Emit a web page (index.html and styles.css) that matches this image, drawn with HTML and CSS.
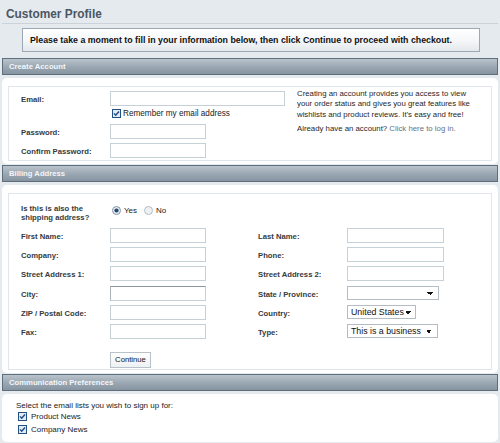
FILE: index.html
```html
<!DOCTYPE html>
<html>
<head>
<meta charset="utf-8">
<link rel="stylesheet" href="styles.css">
</head>
<body>
<div class="page">
  <h1 class="title">Customer Profile</h1>
  <div class="notice">Please take a moment to fill in your information below, then click Continue to proceed with checkout.</div>

  <section class="sec">
    <h2 class="bar">Create Account</h2>
    <div class="panel">
      <div class="box account">
        <div class="acct-form">
          <div class="row"><label class="lbl">Email:</label><input class="txt wide" type="text"></div>
          <div class="remember"><svg class="cb" width="9" height="9" viewBox="0 0 9 9"><rect x="0.5" y="0.5" width="8" height="8" fill="#e4eaf1" stroke="#22507f"/><path d="M2 4.4 L3.7 6.3 L7 2.5" fill="none" stroke="#1e4a8a" stroke-width="1.4"/></svg><span>Remember my email address</span></div>
          <div class="row r-pw"><label class="lbl">Password:</label><input class="txt" type="password"></div>
          <div class="row r-cpw"><label class="lbl">Confirm Password:</label><input class="txt" type="password"></div>
        </div>
        <div class="acct-info">
          <p>Creating an account provides you access to view your order status and gives you great features like wishlists and product reviews. It's easy and free!</p>
          <p class="login">Already have an account? <a class="link">Click here to log in.</a></p>
        </div>
      </div>
    </div>
  </section>

  <section class="sec">
    <h2 class="bar">Billing Address</h2>
    <div class="panel">
      <div class="box billing">
        <div class="question">
          <span class="lbl q-lbl">Is this is also the shipping address?</span>
          <div class="radios">
            <svg class="rd" width="9" height="9" viewBox="0 0 9 9"><circle cx="4.5" cy="4.5" r="4" fill="#e8ecf1" stroke="#8596a8"/><circle cx="4.5" cy="4.5" r="2.1" fill="#23466f"/></svg><span>Yes</span>
            <svg class="rd rd-no" width="9" height="9" viewBox="0 0 9 9"><circle cx="4.5" cy="4.5" r="4" fill="#eef1f4" stroke="#b3bcc5"/></svg><span>No</span>
          </div>
        </div>
        <div class="bgrid">
          <label class="lbl">First Name:</label><input class="txt" type="text">
          <label class="lbl lbl-r">Last Name:</label><input class="txt" type="text">
          <label class="lbl">Company:</label><input class="txt" type="text">
          <label class="lbl lbl-r">Phone:</label><input class="txt" type="text">
          <label class="lbl">Street Address 1:</label><input class="txt" type="text">
          <label class="lbl lbl-r">Street Address 2:</label><input class="txt" type="text">
          <label class="lbl">City:</label><input class="txt dark" type="text">
          <label class="lbl lbl-r">State / Province:</label><select class="sel sel-state"><option></option></select>
          <label class="lbl">ZIP / Postal Code:</label><input class="txt" type="text">
          <label class="lbl lbl-r">Country:</label><select class="sel sel-country"><option>United States</option></select>
          <label class="lbl">Fax:</label><input class="txt" type="text">
          <label class="lbl lbl-r">Type:</label><select class="sel sel-type"><option>This is a business</option></select>
        </div>
        <div class="actions"><button class="btn" type="button">Continue</button></div>
      </div>
    </div>
  </section>

  <section class="sec">
    <h2 class="bar">Communication Preferences</h2>
    <div class="panel comm">
      <p class="comm-intro">Select the email lists you wish to sign up for:</p>
      <div class="opt"><svg class="cb" width="9" height="9" viewBox="0 0 9 9"><rect x="0.5" y="0.5" width="8" height="8" fill="#e4eaf1" stroke="#22507f"/><path d="M2 4.4 L3.7 6.3 L7 2.5" fill="none" stroke="#1e4a8a" stroke-width="1.4"/></svg><span>Product News</span></div>
      <div class="opt"><svg class="cb" width="9" height="9" viewBox="0 0 9 9"><rect x="0.5" y="0.5" width="8" height="8" fill="#e4eaf1" stroke="#22507f"/><path d="M2 4.4 L3.7 6.3 L7 2.5" fill="none" stroke="#1e4a8a" stroke-width="1.4"/></svg><span>Company News</span></div>
    </div>
  </section>
</div>
</body>
</html>
```

FILE: styles.css
```css
* { box-sizing: border-box; }
html, body { margin: 0; padding: 0; }
body {
  background: #e5eaef;
  font-family: "Liberation Sans", Arial, sans-serif;
  color: #222;
  font-size: 8px;
  width: 500px;
  height: 443px;
  overflow: hidden;
}
.page { padding: 0 2px; }

.title {
  margin: 0;
  padding: 7px 4px 2px;
  font-size: 11.9px;
  line-height: 14px;
  font-weight: bold;
  color: #4b5663;
  border-bottom: 1px solid #cbd3da;
}

.notice {
  margin: 4px 0 0 20px;
  width: 458px;
  height: 24px;
  border: 1px solid #9ca8b3;
  background: linear-gradient(#ffffff, #f4f6f8 55%, #e3e8ec);
  padding: 0 0 0 7px;
  font-weight: bold;
  font-size: 8.8px;
  line-height: 23px;
  color: #111;
  white-space: nowrap;
}

.bar {
  margin: 6px 0 0;
  height: 17px;
  border: 1px solid #5f6e7b;
  background: linear-gradient(#b9c3cb, #9ca9b4 50%, #8694a1);
  color: #f3f6f9;
  font-size: 7.7px;
  font-weight: bold;
  line-height: 15px;
  padding-left: 6px;
}
.sec + .sec .bar { margin-top: 1px; }

.panel {
  margin-top: 3px;
  background: #fff;
  border-radius: 5px;
  padding: 8px 6px 3px 6px;
}
.box { border: 1px solid #e0e6eb; }

.lbl {
  font-weight: bold;
  font-size: 7.7px;
  color: #353b40;
  padding-top: 2px;
}

.txt {
  height: 15px;
  width: 96px;
  border: 1px solid #c6d0d7;
  background: #fff;
  padding: 0 2px;
  margin: 0;
  font: 8px "Liberation Sans", Arial, sans-serif;
}
.txt.wide { width: 175px; }
.txt.dark { border-top-color: #8d979f; border-left-color: #a9b2b9; }

/* Create account */
.account {
  display: flex;
  padding: 4px 0 2px 12px;
}
.acct-form { width: 276px; }
.row { display: flex; align-items: center; height: 15px; }
.row .lbl { width: 89px; }
.remember {
  display: flex;
  align-items: center;
  gap: 2px;
  height: 12px;
  margin-top: 1px;
  padding-left: 91px;
  font-size: 8.2px;
  color: #222;
}
.r-pw { margin-top: 5px; }
.r-cpw { margin-top: 4px; }
.acct-info {
  width: 182px;
  margin-top: -2px;
  font-size: 7.8px;
  line-height: 10.4px;
  color: #1f1f1f;
}
.acct-info p { margin: 0; }
.acct-info .login { margin-top: 4px; }
.link { color: #66727e; }

/* Billing */
.billing { padding: 10px 0 1px 12px; }
.question { display: flex; height: 18px; margin-bottom: 6px; }
.q-lbl { width: 89px; line-height: 9px; padding-top: 0; }
.radios {
  display: flex;
  align-items: center;
  height: 10px;
  margin-top: 1px;
  padding-left: 2px;
  font-size: 8px;
  color: #222;
}
.rd { margin-right: 3px; }
.rd-no { margin-left: 7px; }

.bgrid {
  display: grid;
  grid-template-columns: 89px 96px 141px 97px;
  row-gap: 4.2px;
  align-items: center;
}
.bgrid .txt { width: auto; }
.lbl-r { padding-left: 52px; }

.sel {
  appearance: none;
  -webkit-appearance: none;
  height: 14px;
  border: 1px solid #b4bdc4;
  border-radius: 0;
  background-color: #fff;
  background-image: linear-gradient(45deg, transparent 50%, #111 50%), linear-gradient(135deg, #111 50%, transparent 50%);
  background-size: 3px 3px, 3px 3px;
  background-repeat: no-repeat;
  padding: 0 6px 0 3px;
  margin: 0;
  font: 8.8px "Liberation Sans", Arial, sans-serif;
  color: #111;
  line-height: 12px;
}
.sel-state { width: 92px; background-position: calc(100% - 8px) 5px, calc(100% - 5px) 5px; }
.sel-country { width: 69px; background-position: calc(100% - 7px) 5px, calc(100% - 4px) 5px; }
.sel-type { width: 91px; background-position: calc(100% - 8px) 5px, calc(100% - 5px) 5px; }

.actions { margin-top: 13px; padding-left: 89px; }
.btn {
  display: block;
  width: 41px;
  height: 16px;
  padding: 0;
  margin: 0;
  border: 1px solid #b9c2ca;
  background: linear-gradient(#ffffff, #eef1f4);
  font: 7.7px "Liberation Sans", Arial, sans-serif;
  color: #111;
}

/* Communication */
.comm {
  height: 48px;
  padding: 7px 0 6px 14px;
}
.comm-intro { margin: 0; line-height: 10px; font-size: 8px; color: #222; }
.opt {
  display: flex;
  align-items: center;
  gap: 4px;
  height: 13px;
  padding-left: 2px;
  font-size: 8px;
  color: #222;
}
.comm-intro + .opt { margin-top: -1px; }
```
